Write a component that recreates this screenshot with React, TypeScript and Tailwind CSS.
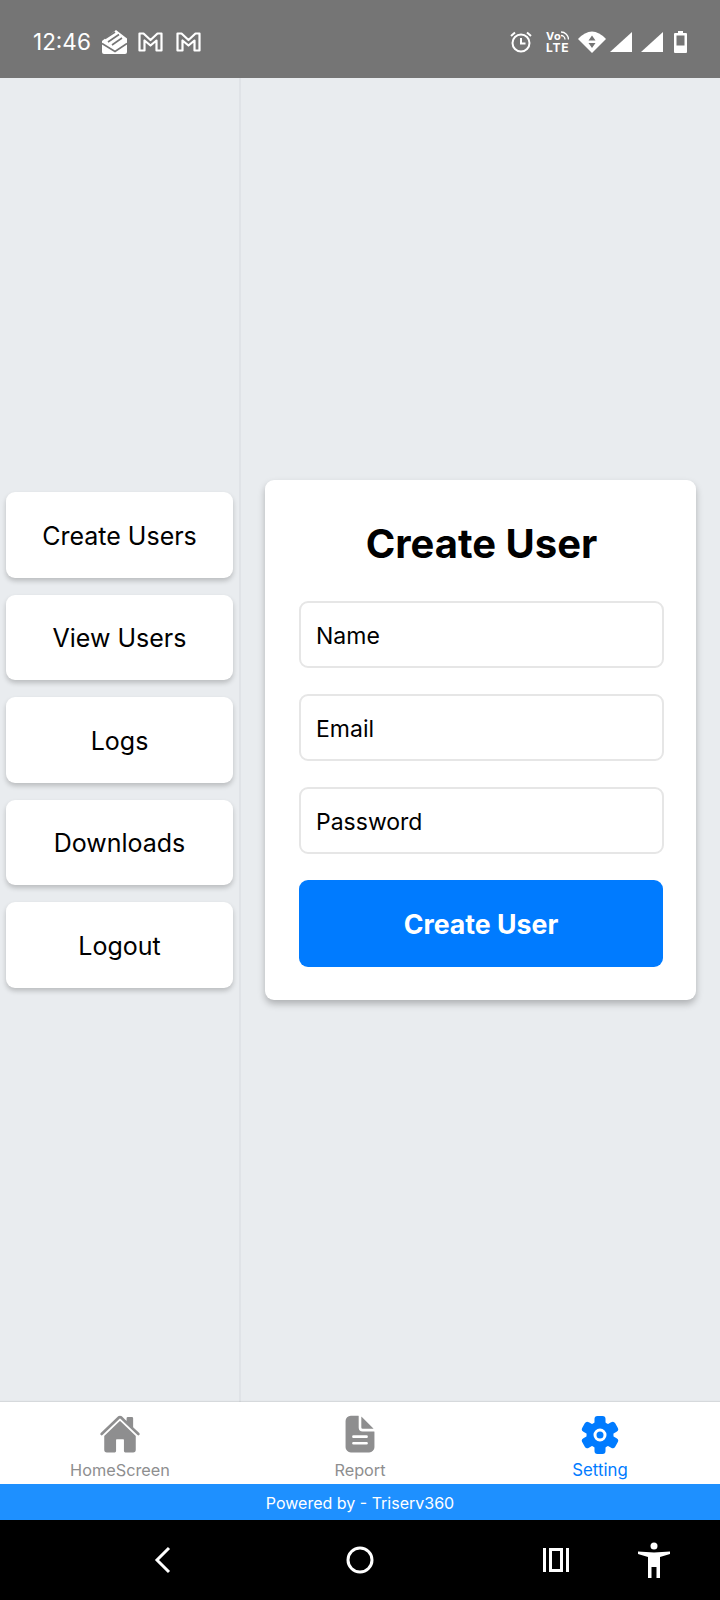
import { IoHome, IoDocumentText } from "react-icons/io5";

const menuItems = ["Create Users", "View Users", "Logs", "Downloads", "Logout"];
const fields = ["Name", "Email", "Password"];

function MailM() {
  return (
    <svg width="25" height="20" viewBox="0 0 25 20" fill="none" stroke="white" strokeWidth="2.200">
      <path d="M1.500 18.500V1.500h4l7 6.500 7-6.500h4v17h-5V8.500l-6 5-6-5v10z" strokeLinejoin="round" />
    </svg>
  );
}

function StatusBar() {
  return (
    <div className="h-[78px] bg-[#757575] flex items-center pl-[33px] pt-[5px]">
      <span className="text-[22.500px] text-white w-[69px]">12:46</span>
      <svg width="25" height="24" viewBox="0 0 25 24">
        <path d="M0 11 14 0l11 8.500V22a2 2 0 0 1-2 2H2a2 2 0 0 1-2-2z" fill="white" />
        <path d="M3 8.500 13 2M6 12 17 4.500M10 15l10-7M0 13.500l13 8 12-8" stroke="#757575" strokeWidth="1.600" fill="none" />
      </svg>
      <div className="ml-[11px]"><MailM /></div>
      <div className="ml-[13px]"><MailM /></div>
      <svg className="ml-[308px]" width="24" height="24" viewBox="0 0 24 24" fill="none" stroke="white" strokeWidth="2">
        <circle cx="12" cy="13" r="8.500" />
        <path d="M12 8v5.500h4.500M2 6l4-3.500M22 6l-4-3.500" />
      </svg>
      <div className="ml-[13px] w-[24px] relative flex flex-col items-start text-white font-bold leading-[11px]">
        <span className="text-[11px] tracking-[0.5px]">Vo</span>
        <span className="text-[12px] tracking-[0.8px]">LTE</span>
        <svg className="absolute left-[14px] top-0" width="9" height="9" viewBox="0 0 9 9" fill="none" stroke="white" strokeWidth="1.300">
          <path d="M1 4.500a4 4 0 0 1 4 4M1 1a7.500 7.500 0 0 1 7.500 7.500" />
        </svg>
      </div>
      <svg className="ml-[8px]" width="28" height="22" viewBox="0 0 28 22">
        <path d="M0 8Q14-7 28 8L14 22z" fill="white" />
        <path d="M14 4.500 10.500 9.500h7zM14 17l-3.500-5h7z" fill="#757575" />
      </svg>
      <svg className="ml-[4px]" width="22" height="20" viewBox="0 0 22 20">
        <path d="M0 20 22 0v20z" fill="white" />
      </svg>
      <svg className="ml-[9px]" width="22" height="20" viewBox="0 0 22 20">
        <path d="M0 20 22 0v20z" fill="white" />
      </svg>
      <svg className="ml-[11px]" width="13" height="22" viewBox="0 0 13 22">
        <path d="M4 0h5v2h3a1 1 0 0 1 1 1v18a1 1 0 0 1-1 1H1a1 1 0 0 1-1-1V3a1 1 0 0 1 1-1h3z" fill="white" />
        <rect x="2.500" y="4.500" width="8" height="10" fill="#757575" />
      </svg>
    </div>
  );
}

function Sidebar() {
  return (
    <div className="w-[241px] shrink-0 border-r-2 border-[#e0e3e7] px-[6px] flex flex-col justify-center gap-[17px]">
      {menuItems.map((item) => (
        <div
          key={item}
          className="h-[85.600px] pt-[3px] bg-white rounded-[9px] shadow-[0_3px_5px_rgba(0,0,0,0.2)] flex items-center justify-center text-[25px] text-black"
        >
          {item}
        </div>
      ))}
    </div>
  );
}

function CreateUserCard() {
  return (
    <div className="w-[431px] h-[520px] bg-white rounded-[9px] shadow-[0_4px_7px_rgba(0,0,0,0.25)] pl-[34px] pr-[32px] pt-[37px]">
      <h1 className="text-[40px] leading-[54px] font-bold text-black text-center">Create User</h1>
      <div className="mt-[30px] flex flex-col gap-[26px]">
        {fields.map((field) => (
          <div
            key={field}
            className="h-[67px] pt-[3px] border-2 border-[#e6e6e6] rounded-[9px] pl-[15px] flex items-center text-[23px] text-black"
          >
            {field}
          </div>
        ))}
      </div>
      <button className="mt-[26px] w-[364px] h-[87px] pt-[1px] bg-[#007bff] rounded-[9px] text-white text-[26.700px] font-bold">
        Create User
      </button>
    </div>
  );
}

function GearIcon() {
  return (
    <svg width="38" height="40" viewBox="0 0 38 40">
      <circle cx="19" cy="20" r="13.500" fill="#007bff" />
      <rect x="13.500" y="1" width="11" height="38" rx="3" fill="#007bff" />
      <rect x="13.500" y="1" width="11" height="38" rx="3" fill="#007bff" transform="rotate(60 19 20)" />
      <rect x="13.500" y="1" width="11" height="38" rx="3" fill="#007bff" transform="rotate(120 19 20)" />
      <circle cx="19" cy="20" r="5" fill="none" stroke="white" strokeWidth="3" />
    </svg>
  );
}

function BottomTabs() {
  return (
    <div className="h-[82px] bg-white flex shadow-[0_-1px_1px_rgba(0,0,0,0.08)]">
      <div className="w-[240px] flex flex-col items-center pt-[11px] text-[#8e8e8f]">
        <IoHome size={42} />
        <span className="text-[16.300px] leading-[20px] mt-[5px]">HomeScreen</span>
      </div>
      <div className="w-[240px] flex flex-col items-center pt-[11px] text-[#8e8e8f]">
        <IoDocumentText size={42} />
        <span className="text-[16.300px] leading-[20px] mt-[5px]">Report</span>
      </div>
      <div className="w-[240px] flex flex-col items-center pt-[13px] text-[#007bff]">
        <GearIcon />
        <span className="text-[16.800px] leading-[20px] mt-[5px]">Setting</span>
      </div>
    </div>
  );
}

function NavBar() {
  return (
    <div className="h-[80px] bg-black flex items-center">
      <svg className="ml-[152px]" width="22" height="30" viewBox="0 0 22 30" fill="none" stroke="white" strokeWidth="3">
        <path d="M17 3 5 15l12 12" />
      </svg>
      <svg className="ml-[171px]" width="30" height="30" viewBox="0 0 30 30" fill="none" stroke="white" strokeWidth="3">
        <circle cx="15" cy="15" r="12" />
      </svg>
      <svg className="ml-[167px]" width="28" height="24" viewBox="0 0 28 24" fill="white">
        <rect x="1" y="0" width="3" height="24" />
        <path d="M7 0h14v24H7zm3 3v18h8V3z" fillRule="evenodd" />
        <rect x="24" y="0" width="3" height="24" />
      </svg>
      <svg className="ml-[67px]" width="34" height="36" viewBox="0 0 34 36" fill="white">
        <circle cx="17" cy="4" r="3.500" />
        <path d="M1 9.500 17 10.500 33 9.500V12l-10 3V36h-3.500V25h-5V36H11V15L1 12z" />
      </svg>
    </div>
  );
}

export default function App() {
  return (
    <div className="w-[720px] h-[1600px] flex flex-col bg-[#e9ecef] font-['Inter',sans-serif]">
      <StatusBar />
      <div className="flex-1 flex">
        <Sidebar />
        <div className="flex-1 flex items-center justify-center">
          <CreateUserCard />
        </div>
      </div>
      <BottomTabs />
      <div className="h-[36px] pt-[1px] bg-[#1e90ff] flex items-center justify-center text-white text-[16px]">
        Powered by - Triserv360
      </div>
      <NavBar />
    </div>
  );
}
